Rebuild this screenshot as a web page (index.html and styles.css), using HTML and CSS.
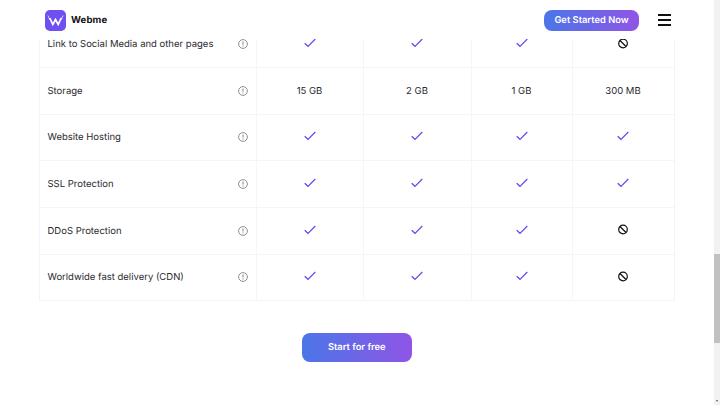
FILE: index.html
```html
<!DOCTYPE html>
<html lang="en">
<head>
<meta charset="utf-8">
<title>Webme</title>
<link rel="stylesheet" href="styles.css">
</head>
<body>
<svg class="defs" width="0" height="0" aria-hidden="true">
  <defs>
    <symbol id="check" viewBox="0 0 12 10"><path d="M.7 5.2 4 8.3 11.3 1" fill="none" stroke="currentColor" stroke-width="1.2"/></symbol>
    <symbol id="no" viewBox="0.5 0 11 11"><circle cx="5.5" cy="5.5" r="4.3" fill="none" stroke="currentColor" stroke-width="1.2"/><path d="M2.5 2.5 8.5 8.5" stroke="currentColor" stroke-width="1.2"/></symbol>
    <symbol id="info" viewBox="0 0 10 10"><circle cx="5" cy="5" r="4.4" fill="none" stroke="currentColor" stroke-width="1"/><path d="M5 2.6V5.6M5 6.6V7.6" stroke="currentColor" stroke-width="1.1"/></symbol>
  </defs>
</svg>
<div class="page">
  <header class="topbar">
    <a class="brand">
      <span class="logo"><svg width="17" height="12" viewBox="0 0 17 12"><path d="M2.8 4 5.8 10.5 8.5 5.5 11.2 10.5 14.2 4" fill="none" stroke="#fff" stroke-width="1.7"/><path d="M1 1.5 2.8 6M16 1.5 14.2 6" fill="none" stroke="#fff" stroke-opacity=".7" stroke-width="1"/></svg></span>
      <span class="brand-name">Webme</span>
    </a>
    <div class="topbar-actions">
      <a class="cta cta-small">Get Started Now</a>
      <span class="burger"><i></i><i></i><i></i></span>
    </div>
  </header>
  <main class="content">
    <table class="compare">
      <tbody>
        <tr><td class="feature"><div class="feature-inner"><span class="label">Link to Social Media and other pages</span><svg class="info"><use href="#info"/></svg></div></td><td><svg class="check"><use href="#check"/></svg></td><td><svg class="check"><use href="#check"/></svg></td><td><svg class="check"><use href="#check"/></svg></td><td><svg class="no"><use href="#no"/></svg></td></tr>
        <tr><td class="feature"><div class="feature-inner"><span class="label">Storage</span><svg class="info"><use href="#info"/></svg></div></td><td class="value">15 GB</td><td class="value">2 GB</td><td class="value">1 GB</td><td class="value">300 MB</td></tr>
        <tr><td class="feature"><div class="feature-inner"><span class="label">Website Hosting</span><svg class="info"><use href="#info"/></svg></div></td><td><svg class="check"><use href="#check"/></svg></td><td><svg class="check"><use href="#check"/></svg></td><td><svg class="check"><use href="#check"/></svg></td><td><svg class="check"><use href="#check"/></svg></td></tr>
        <tr><td class="feature"><div class="feature-inner"><span class="label">SSL Protection</span><svg class="info"><use href="#info"/></svg></div></td><td><svg class="check"><use href="#check"/></svg></td><td><svg class="check"><use href="#check"/></svg></td><td><svg class="check"><use href="#check"/></svg></td><td><svg class="check"><use href="#check"/></svg></td></tr>
        <tr><td class="feature"><div class="feature-inner"><span class="label">DDoS Protection</span><svg class="info"><use href="#info"/></svg></div></td><td><svg class="check"><use href="#check"/></svg></td><td><svg class="check"><use href="#check"/></svg></td><td><svg class="check"><use href="#check"/></svg></td><td><svg class="no"><use href="#no"/></svg></td></tr>
        <tr><td class="feature"><div class="feature-inner"><span class="label">Worldwide fast delivery (CDN)</span><svg class="info"><use href="#info"/></svg></div></td><td><svg class="check"><use href="#check"/></svg></td><td><svg class="check"><use href="#check"/></svg></td><td><svg class="check"><use href="#check"/></svg></td><td><svg class="no"><use href="#no"/></svg></td></tr>
      </tbody>
    </table>
    <div class="action"><a class="cta cta-large">Start for free</a></div>
  </main>
  <div class="scrollbar"><div class="thumb"></div><div class="arrow"></div></div>
</div>
</body>
</html>
```
FILE: styles.css
```css
* { box-sizing: border-box; }
html, body { margin: 0; height: 100%; overflow: hidden; }
body { background: #fff; color: #2a2a30; font-family: Inter, "Liberation Sans", sans-serif; text-rendering: geometricPrecision; }
.defs { position: absolute; }
.page { display: flex; height: 405px; position: relative; }
.topbar {
  position: absolute; top: 0; left: 0; right: 6px; height: 39px; z-index: 2;
  background: #fff; display: flex; align-items: center; justify-content: space-between;
  padding: 1px 43px 0 45px;
}
.brand { display: flex; align-items: center; gap: 5px; }
.logo {
  width: 21px; height: 21px; border-radius: 5px; background: #6e4ff0;
  display: flex; align-items: center; justify-content: center;
}
.brand-name { font-size: 9.6px; font-weight: 700; color: #111; letter-spacing: .1px; }
.topbar-actions { display: flex; align-items: center; gap: 19px; }
.cta {
  display: flex; align-items: center; justify-content: center; color: #fff; font-weight: 600;
  background: linear-gradient(90deg, #4b76e8, #8f55e6);
}
.cta-small { width: 95px; height: 21px; border-radius: 8px; font-size: 9.35px; }
.cta-large { width: 109.5px; height: 28.5px; border-radius: 8px; font-size: 9.35px; padding-top: 1px; }
.burger { display: flex; flex-direction: column; gap: 3px; width: 13px; }
.burger i { display: block; height: 2px; background: #111; }
.content { flex: 1; min-width: 0; padding: 20.3px 40px 0 38.5px; }
.compare { border-collapse: collapse; table-layout: fixed; width: 635px; font-size: 9.5px; }
.compare td { height: 46.66px; border: 1px solid #f4f4fb; text-align: center; padding: 0; vertical-align: middle; }
.compare td:nth-child(1) { width: 217px; }
.compare td:nth-child(2) { width: 107px; }
.compare td:nth-child(3) { width: 108px; }
.compare td:nth-child(4) { width: 101px; }
.compare td:nth-child(5) { width: 102px; }
.feature { text-align: left !important; }
.feature-inner { display: flex; align-items: center; justify-content: space-between; padding: 0 8px 0 8px; }
.label { padding-top: 1px; }
.value { padding-top: 1px !important; }
.info { width: 10px; height: 10px; color: #8f8f8f; }
.check { width: 12px; height: 10px; color: #6a45ee; display: block; margin: -2px auto 0; }
.no { width: 11px; height: 11px; color: #111; display: block; margin: -2px auto 0; }
.action { display: flex; justify-content: center; margin-top: 32px; padding-left: 1px; }
.scrollbar { width: 6px; background: #f1f1f1; position: relative; }
.thumb { position: absolute; left: 0; right: 0; top: 254px; height: 89px; background: #c1c1c1; }
.arrow { position: absolute; left: 2px; bottom: 2px; width: 0; height: 0; border: 1px solid transparent; border-top: 2px solid #555; }
```
